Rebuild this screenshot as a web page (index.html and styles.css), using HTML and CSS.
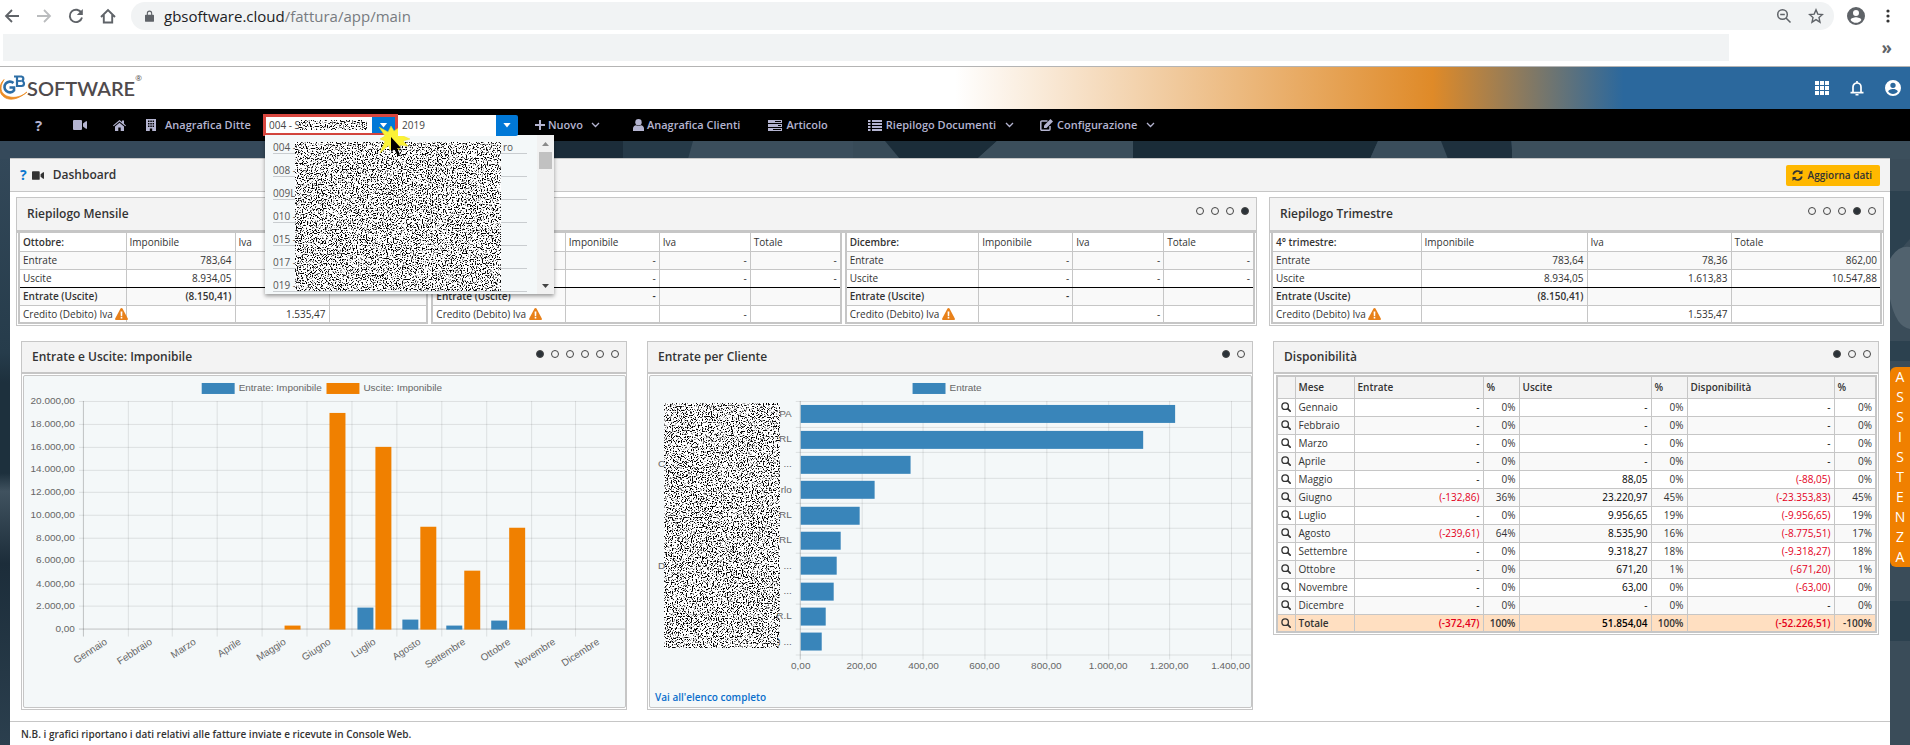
FILE: index.html
```html
<!DOCTYPE html>
<html lang="it">
<head>
<meta charset="utf-8">
<title>Dashboard - GB Software</title>
<link rel="stylesheet" href="styles.css">
</head>
<body>
<svg class="defs" aria-hidden="true">
  <filter id="grain" x="0" y="0" width="100%" height="100%" color-interpolation-filters="sRGB">
    <feTurbulence type="fractalNoise" baseFrequency="0.8" numOctaves="2" seed="4"/>
    <feColorMatrix values="9 0 0 0 -3.3  9 0 0 0 -3.3  9 0 0 0 -3.3  0 0 0 0 1"/>
  </filter>
  <symbol id="i-cam" viewBox="0 0 14 10"><path d="M1 0h7a1 1 0 0 1 1 1v8a1 1 0 0 1-1 1H1a1 1 0 0 1-1-1V1a1 1 0 0 1 1-1zM10 3.5L13 1.2h1v7.6h-1L10 6.5z"/></symbol>
  <symbol id="i-lens" viewBox="0 0 12 12"><circle cx="5" cy="5" r="3.9" fill="none" stroke="currentColor" stroke-width="1.6"/><path d="M8 8l3 3" stroke="currentColor" stroke-width="2" stroke-linecap="round"/></symbol>
  <symbol id="i-warn" viewBox="0 0 13 12"><path d="M6.500 0c.5 0 .8.3 1 .6l5.300 10c.4.700 0 1.400-.8 1.400H1c-.8 0-1.200-.7-.8-1.400l5.300-10c.2-.3.500-.6 1-.6z" fill="#e8811a"/><path d="M5.600 3.500h1.800L7.200 8H5.800zM5.700 8.800h1.600v1.600H5.700z" fill="#fff"/></symbol>
  <symbol id="i-chev" viewBox="0 0 9 6"><path d="M1 1l3.500 3.500L8 1" fill="none" stroke="currentColor" stroke-width="1.300"/></symbol>
  <symbol id="i-user" viewBox="0 0 24 24"><path fill-rule="evenodd" d="M12 0a12 12 0 1 0 0 24 12 12 0 0 0 0-24zm0 4a4 4 0 1 1 0 8 4 4 0 0 1 0-8zm0 17c-3 0-5.600-1.500-7.200-3.800.1-2.400 4.800-3.700 7.200-3.700s7.100 1.300 7.200 3.700C17.600 19.500 15 21 12 21z"/></symbol>
</svg>

<div class="browser">
  <div class="toolbar">
    <button class="tool" aria-label="Indietro"><svg width="16" height="16" viewBox="0 0 16 16"><path d="M15 8H2M8 2L2 8l6 6" fill="none" stroke="#5f6368" stroke-width="1.800"/></svg></button>
    <button class="tool" aria-label="Avanti"><svg width="16" height="16" viewBox="0 0 16 16"><path d="M1 8h13M8 2l6 6-6 6" fill="none" stroke="#babcbe" stroke-width="1.800"/></svg></button>
    <button class="tool" aria-label="Ricarica"><svg width="16" height="16" viewBox="0 0 16 16"><path d="M13.500 5A6.200 6.200 0 1 0 14 9.500" fill="none" stroke="#5f6368" stroke-width="1.900"/><path d="M14.800 1v6h-6z" fill="#5f6368"/></svg></button>
    <button class="tool" aria-label="Pagina iniziale"><svg width="16" height="16" viewBox="0 0 16 16"><path d="M1 9L8 2l7 7M3.800 7v7.500h8.400V7" fill="none" stroke="#5f6368" stroke-width="1.900"/></svg></button>
    <div class="omnibox">
      <svg width="9" height="12" viewBox="0 0 10 13"><path fill-rule="evenodd" d="M2 5V3.500a3 3 0 0 1 6 0V5h1a1 1 0 0 1 1 1v6a1 1 0 0 1-1 1H1a1 1 0 0 1-1-1V6a1 1 0 0 1 1-1zm1.200 0h3.600V3.500a1.800 1.800 0 0 0-3.600 0z" fill="#5f6368"/></svg>
      <span class="url">gbsoftware.cloud<span class="path">/fattura/app/main</span></span>
      <svg width="16" height="16" viewBox="0 0 16 16"><circle cx="6.500" cy="6.500" r="4.800" fill="none" stroke="#5f6368" stroke-width="1.500"/><path d="M10 10l4.500 4.500M4.200 6.500h4.600" stroke="#5f6368" stroke-width="1.500"/></svg>
      <svg width="16" height="16" viewBox="0 0 16 16"><path d="M8 1.800l1.800 4.300 4.700.4L11 9.600l1 4.600-4-2.500-4 2.500 1-4.600L1.500 6.500l4.700-.4z" fill="none" stroke="#5f6368" stroke-width="1.400"/></svg>
    </div>
    <svg class="avatar" width="18" height="18"><use href="#i-user"/></svg>
    <button class="tool kebab" aria-label="Menu"><svg width="4" height="14" viewBox="0 0 4 14" fill="#5f6368"><circle cx="2" cy="2" r="1.600"/><circle cx="2" cy="7" r="1.600"/><circle cx="2" cy="12" r="1.600"/></svg></button>
  </div>
  <div class="bookmarks"><div class="strip"></div><span class="more">»</span></div>
</div>

<header class="brand">
  <div class="logo">
    <svg width="27" height="26" viewBox="0 0 27 26" aria-hidden="true">
      <path d="M4 4.500A13 13 0 0 0 0 12v4c2 8 13 13 27 1-6 5-12 6-17 5C5 21 1 18 1 13c0-4 2-6 3-8.500z" fill="#ec8c23" stroke="#ec8c23" stroke-width=".8"/>
      <path d="M13.500 8A5.400 5.400 0 1 0 14 15.500V12.500h-4.500" fill="none" stroke="#2d6ea6" stroke-width="2.600"/>
      <path d="M17 1.500v9.500h4.500a2.500 2.500 0 0 0 0-5 2.300 2.300 0 0 0 0-4.500H14" fill="none" stroke="#2d6ea6" stroke-width="2.200"/>
      <path d="M17 6h4.500" stroke="#2d6ea6" stroke-width="1.800"/>
    </svg>
    <span class="word">SOFTWARE</span><span class="reg">®</span>
  </div>
  <div class="brand-tools">
    <button aria-label="Applicazioni"><svg width="14" height="14" viewBox="0 0 14 14"><path d="M0 0h4v4H0zM5 0h4v4H5zM10 0h4v4h-4zM0 5h4v4H0zM5 5h4v4H5zM10 5h4v4h-4zM0 10h4v4H0zM5 10h4v4H5zM10 10h4v4h-4z"/></svg></button>
    <button aria-label="Notifiche"><svg width="14" height="16" viewBox="0 0 14 16"><path d="M3 12.500V7a4 4 0 0 1 8 0v5.500M.5 12.700h13M7 3V1" fill="none" stroke="#fff" stroke-width="1.700"/><path d="M5.500 14h3v1.500h-3z"/></svg></button>
    <button aria-label="Profilo"><svg width="16" height="16"><use href="#i-user"/></svg></button>
  </div>
</header>

<nav class="menu">
  <a class="m-help" href="#">?</a>
  <a class="m-cam" href="#" aria-label="Video"><svg width="14" height="10"><use href="#i-cam"/></svg></a>
  <a class="m-home" href="#" aria-label="Home"><svg width="13" height="11" viewBox="0 0 13 11"><path d="M0 5.500L6.500 0 9 2V.5h2v3.200l2 1.800-.7.800L6.500 1.500.7 6.300z"/><path d="M6.500 2.800L11 6.500V11H7.700V7.500H5.300V11H2V6.500z"/></svg></a>
  <a class="m-firms" href="#"><svg width="10" height="12" viewBox="0 0 10 12"><path fill-rule="evenodd" d="M0 0h10v12H6.200V9.500H3.800V12H0zM2 1.500V3h1.500V1.500zm2.300 0V3h1.500V1.500zm2.300 0V3H8V1.500zM2 4v1.500h1.500V4zm2.300 0v1.500h1.500V4zm2.300 0v1.500H8V4zM2 6.500V8h1.500V6.500zm2.300 0V8h1.500V6.500zm2.300 0V8H8V6.500z"/></svg>Anagrafica Ditte</a>
  <div class="combo">
    <input type="text" value="004 - S" aria-label="Ditta"><svg class="mask-input"><rect width="100%" height="100%" filter="url(#grain)"/></svg>
    <button aria-label="Apri elenco ditte"><span class="tri"></span></button>
    <div class="list">
      <ul role="listbox" aria-label="Ditte">
        <li role="option"><span>004 -</span><span>ro</span></li>
        <li role="option">008 -</li>
        <li role="option">009L</li>
        <li role="option">010 -</li>
        <li role="option">015 -</li>
        <li role="option">017 -</li>
        <li role="option">019 -</li>
      </ul>
      <svg class="mask-list"><rect width="100%" height="100%" filter="url(#grain)"/></svg>
      <div class="bar"><span class="up"></span><span class="thumb"></span><span class="down"></span></div>
    </div>
    <svg class="burst" width="36" height="34" viewBox="0 0 36 34"><path d="M2 2l9 5 3-6 3 5 6-4 0 5 12-5-9 9 7 3-7 2 5 5-8-1-1 5-4-4-5 4-1-5-9 8 5-12-5-2 5-3z" fill="#fbf236" stroke="#e8dc2c" stroke-width=".5"/><path d="M14 12v15l3.400-2.800 3 6.300 2.600-1.300-3-6h4.200z" fill="#000"/></svg>
  </div>
  <div class="year"><select aria-label="Anno"><option>2019</option></select><span class="cap"><span class="tri"></span></span></div>
  <a class="m-new" href="#"><svg width="10" height="10" viewBox="0 0 10 10"><path d="M5 0v10M0 5h10" stroke="currentColor" stroke-width="2"/></svg>Nuovo<svg class="chev" width="9" height="6"><use href="#i-chev"/></svg></a>
  <a class="m-clients" href="#"><svg width="11" height="12" viewBox="0 0 11 12"><circle cx="5.500" cy="3.200" r="3.200"/><path d="M0 12V9.500C0 7.500 1.500 6.500 3 6.300c1.500 1 3.500 1 5 0 1.500.2 3 1.200 3 3.200V12z"/></svg>Anagrafica Clienti</a>
  <a class="m-item" href="#"><svg width="14" height="11" viewBox="0 0 14 11"><path fill-rule="evenodd" d="M0 0h14v3H0zM7 1v1h6V1zM0 4h14v3H0zm10 1v1h3V5zM0 8h14v3H0zm5 1v1h8V9z"/></svg>Articolo</a>
  <a class="m-docs" href="#"><svg width="14" height="11" viewBox="0 0 14 11"><path d="M0 0h2.500v2H0zM4 0h10v2H4zM0 3h2.500v2H0zM4 3h10v2H4zM0 6h2.500v2H0zM4 6h10v2H4zM0 9h2.500v2H0zM4 9h10v2H4z"/></svg>Riepilogo Documenti<svg class="chev" width="9" height="6"><use href="#i-chev"/></svg></a>
  <a class="m-conf" href="#"><svg width="13" height="12" viewBox="0 0 13 12"><path d="M7.500 2H1.800A1 1 0 0 0 .8 3v7.200a1 1 0 0 0 1 1H9a1 1 0 0 0 1-1V7" fill="none" stroke="currentColor" stroke-width="1.500"/><path d="M4 9V6.500L10.500 0 13 2.500 6.500 9z"/></svg>Configurazione<svg class="chev" width="9" height="6"><use href="#i-chev"/></svg></a>
</nav>

<div class="stage">
  <svg class="scene" viewBox="0 0 1910 604" preserveAspectRatio="none" aria-hidden="true">
    <defs><linearGradient id="wood" x1="0" x2="0" y1="0" y2="1"><stop offset="0" stop-color="#34495a"/><stop offset=".35" stop-color="#263c4b"/><stop offset=".4" stop-color="#1d303d"/><stop offset=".55" stop-color="#1d303d"/><stop offset=".58" stop-color="#40525f"/><stop offset=".7" stop-color="#1c2d3a"/><stop offset="1" stop-color="#2b3f4e"/></linearGradient></defs>
    <rect width="1910" height="604" fill="url(#wood)"/>
    <rect width="560" height="18" fill="#35495a"/>
    <rect x="553" width="70" height="18" fill="#1b2c39"/>
    <rect x="623" width="300" height="18" fill="#3b4e5c"/>
    <path d="M623 0h70l-5 18h-65z" fill="#263a48"/>
    <path d="M853 0h145l-15 18H853z" fill="#384b58"/>
    <path d="M885 0h112l-20 18H900z" fill="#1b2d39"/>
    <path d="M997 0h136v18H977z" fill="#3b4e5b"/>
    <path d="M1133 0h245l-8 18h-237z" fill="#1a2c38"/>
    <path d="M1378 0h67l5 18h-80z" fill="#3a4d5b"/>
    <path d="M1441 0h70l2 18h-65z" fill="#1e303d"/>
    <rect x="1512" width="398" height="18" fill="#3c4f5c"/>
    <path d="M1890 18h20v586h-20z" fill="#3a4c59"/>
    <path d="M1890 50h20v48q-20 20-20 50zM1890 200h20v20h-20zM1890 460h20v40h-20z" fill="#2c414f"/>
    <path d="M1890 118q8-14 20-12v82q-14-2-20-30z" fill="#51626e"/>
  </svg>

  <main class="sheet">
    <div class="sheet-head">
      <a class="help" href="#">?</a>
      <svg width="12" height="9"><use href="#i-cam"/></svg>
      <h1>Dashboard</h1>
      <button class="refresh"><svg width="11" height="11" viewBox="0 0 11 11"><path d="M1.200 4.500A4.300 4.300 0 0 1 9 3M9.800 6.500A4.300 4.300 0 0 1 2 8" fill="none" stroke="currentColor" stroke-width="1.600"/><path d="M10.500 0v4h-4zM.5 11V7h4z"/></svg>Aggiorna dati</button>
    </div>

    <div class="summary">
      <section class="panel">
        <div class="panel-head"><h2>Riepilogo Mensile</h2><div class="dots"><button aria-label="1"></button><button aria-label="2"></button><button aria-label="3"></button><button class="on" aria-label="4"></button></div></div>
        <div class="tables">
          <table class="sum first">
            <colgroup><col><col><col><col></colgroup>
            <tr><th>Ottobre:</th><td>Imponibile</td><td>Iva</td><td></td></tr>
            <tr><td>Entrate</td><td>783,64</td><td></td><td></td></tr>
            <tr><td>Uscite</td><td>8.934,05</td><td></td><td></td></tr>
            <tr><td>Entrate (Uscite)</td><td>(8.150,41)</td><td></td><td></td></tr>
            <tr><td>Credito (Debito) Iva <svg width="13" height="12"><use href="#i-warn"/></svg></td><td></td><td>1.535,47</td><td></td></tr>
          </table>
          <table class="sum">
            <colgroup><col><col><col><col></colgroup>
            <tr><th></th><td>Imponibile</td><td>Iva</td><td>Totale</td></tr>
            <tr><td></td><td>-</td><td>-</td><td>-</td></tr>
            <tr><td></td><td>-</td><td>-</td><td>-</td></tr>
            <tr><td>Entrate (Uscite)</td><td>-</td><td></td><td></td></tr>
            <tr><td>Credito (Debito) Iva <svg width="13" height="12"><use href="#i-warn"/></svg></td><td></td><td>-</td><td></td></tr>
          </table>
          <table class="sum">
            <colgroup><col><col><col><col></colgroup>
            <tr><th>Dicembre:</th><td>Imponibile</td><td>Iva</td><td>Totale</td></tr>
            <tr><td>Entrate</td><td>-</td><td>-</td><td>-</td></tr>
            <tr><td>Uscite</td><td>-</td><td>-</td><td>-</td></tr>
            <tr><td>Entrate (Uscite)</td><td>-</td><td></td><td></td></tr>
            <tr><td>Credito (Debito) Iva <svg width="13" height="12"><use href="#i-warn"/></svg></td><td></td><td>-</td><td></td></tr>
          </table>
        </div>
      </section>
      <section class="panel">
        <div class="panel-head"><h2>Riepilogo Trimestre</h2><div class="dots"><button aria-label="1"></button><button aria-label="2"></button><button aria-label="3"></button><button class="on" aria-label="4"></button><button aria-label="5"></button></div></div>
        <div class="tables single">
          <table class="sum quarter">
            <colgroup><col><col><col><col></colgroup>
            <tr><th>4° trimestre:</th><td>Imponibile</td><td>Iva</td><td>Totale</td></tr>
            <tr><td>Entrate</td><td>783,64</td><td>78,36</td><td>862,00</td></tr>
            <tr><td>Uscite</td><td>8.934,05</td><td>1.613,83</td><td>10.547,88</td></tr>
            <tr><td>Entrate (Uscite)</td><td>(8.150,41)</td><td></td><td></td></tr>
            <tr><td>Credito (Debito) Iva <svg width="13" height="12"><use href="#i-warn"/></svg></td><td></td><td>1.535,47</td><td></td></tr>
          </table>
        </div>
      </section>
    </div>

    <div class="cards">
      <section class="card">
        <div class="card-head"><h2>Entrate e Uscite: Imponibile</h2><div class="dots"><button class="on" aria-label="1"></button><button aria-label="2"></button><button aria-label="3"></button><button aria-label="4"></button><button aria-label="5"></button><button aria-label="6"></button></div></div>
        <div class="chart">
          <svg viewBox="24 377 602 332" role="img" aria-label="Entrate e Uscite per mese">
            <path class="grid" d="M79 402.500H626M79 425.500H626M79 448.500H626M79 471.500H626M79 493.500H626M79 516.500H626M79 539.500H626M79 562.500H626M79 585.500H626M79 607.500H626M128.500 402V638M172.500 402V638M217.500 402V638M262.500 402V638M307.500 402V638M352.500 402V638M397.500 402V638M442.500 402V638M487.500 402V638M532.500 402V638M576.500 402V638"/>
            <path class="axis" d="M83.500 402V638M79 630.500H626"/>
            <g class="blue"><rect x="202" y="384" width="33" height="11"/><rect x="358" y="609" width="16" height="22"/><rect x="403" y="621" width="16" height="10"/><rect x="447" y="627" width="16" height="4"/><rect x="492" y="622" width="16" height="9"/></g>
            <g class="orange"><rect x="327" y="384" width="33" height="11"/><rect x="285" y="627" width="16" height="4"/><rect x="330" y="414" width="16" height="217"/><rect x="376" y="448" width="16" height="183"/><rect x="421" y="528" width="16" height="103"/><rect x="465" y="572" width="16" height="59"/><rect x="510" y="529" width="16" height="102"/></g>
            <text x="239" y="392">Entrate: Imponibile</text><text x="364" y="392">Uscite: Imponibile</text>
            <g text-anchor="end">
              <text x="75" y="405">20.000,00</text><text x="75" y="428">18.000,00</text><text x="75" y="451">16.000,00</text><text x="75" y="473">14.000,00</text><text x="75" y="496">12.000,00</text><text x="75" y="519">10.000,00</text><text x="75" y="542">8.000,00</text><text x="75" y="564">6.000,00</text><text x="75" y="588">4.000,00</text><text x="75" y="610">2.000,00</text><text x="75" y="633">0,00</text>
              <text transform="translate(108 645) rotate(-33)">Gennaio</text>
              <text transform="translate(153 645) rotate(-33)">Febbraio</text>
              <text transform="translate(197 645) rotate(-33)">Marzo</text>
              <text transform="translate(242 645) rotate(-33)">Aprile</text>
              <text transform="translate(287 645) rotate(-33)">Maggio</text>
              <text transform="translate(332 645) rotate(-33)">Giugno</text>
              <text transform="translate(377 645) rotate(-33)">Luglio</text>
              <text transform="translate(422 645) rotate(-33)">Agosto</text>
              <text transform="translate(467 645) rotate(-33)">Settembre</text>
              <text transform="translate(512 645) rotate(-33)">Ottobre</text>
              <text transform="translate(557 645) rotate(-33)">Novembre</text>
              <text transform="translate(601 645) rotate(-33)">Dicembre</text>
            </g>
          </svg>
        </div>
      </section>

      <section class="card">
        <div class="card-head"><h2>Entrate per Cliente</h2><div class="dots"><button class="on" aria-label="1"></button><button aria-label="2"></button></div></div>
        <div class="chart">
          <svg viewBox="650 377 602 313" role="img" aria-label="Entrate per cliente">
            <path class="grid" d="M796 402.500H1252M796 428.500H1252M796 453.500H1252M796 479.500H1252M796 504.500H1252M796 529.500H1252M796 554.500H1252M796 580.500H1252M796 605.500H1252M796 630.500H1252M796 656.500H1252M862.500 402V661M923.500 402V661M985.500 402V661M1047.500 402V661M1109.500 402V661M1170.500 402V661M1232.500 402V661"/>
            <path class="axis" d="M800.500 402V661"/>
            <g class="blue"><rect x="913" y="384" width="33" height="11"/><rect x="801" y="406" width="375" height="18"/><rect x="801" y="432" width="343" height="18"/><rect x="801" y="457" width="110" height="18"/><rect x="801" y="482" width="74" height="18"/><rect x="801" y="508" width="59" height="18"/><rect x="801" y="533" width="40" height="18"/><rect x="801" y="558" width="36" height="18"/><rect x="801" y="584" width="33" height="18"/><rect x="801" y="609" width="25" height="18"/><rect x="801" y="634" width="21" height="18"/></g>
            <text x="950" y="392">Entrate</text>
            <rect x="665" y="405" width="115" height="244" filter="url(#grain)"/>
            <g text-anchor="end"><text x="792" y="418">PA</text><text x="792" y="443">RL</text><text x="792" y="468">...</text><text x="792" y="494">rlo</text><text x="792" y="519">RL</text><text x="792" y="544">RL</text><text x="792" y="570">...</text><text x="792" y="595">...</text><text x="792" y="620">R.L</text><text x="792" y="646">) ...</text></g>
            <text x="658" y="468">C</text><text x="658" y="570">D</text>
            <g text-anchor="middle"><text x="801" y="671">0,00</text><text x="862" y="671">200,00</text><text x="924" y="671">400,00</text><text x="985" y="671">600,00</text><text x="1047" y="671">800,00</text><text x="1109" y="671">1.000,00</text><text x="1170" y="671">1.200,00</text></g>
            <text x="1251" y="671" text-anchor="end">1.400,00</text>
          </svg>
          <a class="all" href="#">Vai all'elenco completo</a>
        </div>
      </section>

      <section class="card">
        <div class="card-head"><h2>Disponibilità</h2><div class="dots"><button class="on" aria-label="1"></button><button aria-label="2"></button><button aria-label="3"></button></div></div>
        <table class="avail">
          <colgroup><col><col><col><col><col><col><col><col></colgroup>
          <thead><tr><th></th><th>Mese</th><th>Entrate</th><th>%</th><th>Uscite</th><th>%</th><th>Disponibilità</th><th>%</th></tr></thead>
          <tbody>
            <tr><td><svg><use href="#i-lens"/></svg></td><td>Gennaio</td><td>-</td><td>0%</td><td>-</td><td>0%</td><td>-</td><td>0%</td></tr>
            <tr><td><svg><use href="#i-lens"/></svg></td><td>Febbraio</td><td>-</td><td>0%</td><td>-</td><td>0%</td><td>-</td><td>0%</td></tr>
            <tr><td><svg><use href="#i-lens"/></svg></td><td>Marzo</td><td>-</td><td>0%</td><td>-</td><td>0%</td><td>-</td><td>0%</td></tr>
            <tr><td><svg><use href="#i-lens"/></svg></td><td>Aprile</td><td>-</td><td>0%</td><td>-</td><td>0%</td><td>-</td><td>0%</td></tr>
            <tr><td><svg><use href="#i-lens"/></svg></td><td>Maggio</td><td>-</td><td>0%</td><td>88,05</td><td>0%</td><td class="neg">(-88,05)</td><td>0%</td></tr>
            <tr><td><svg><use href="#i-lens"/></svg></td><td>Giugno</td><td class="neg">(-132,86)</td><td>36%</td><td>23.220,97</td><td>45%</td><td class="neg">(-23.353,83)</td><td>45%</td></tr>
            <tr><td><svg><use href="#i-lens"/></svg></td><td>Luglio</td><td>-</td><td>0%</td><td>9.956,65</td><td>19%</td><td class="neg">(-9.956,65)</td><td>19%</td></tr>
            <tr><td><svg><use href="#i-lens"/></svg></td><td>Agosto</td><td class="neg">(-239,61)</td><td>64%</td><td>8.535,90</td><td>16%</td><td class="neg">(-8.775,51)</td><td>17%</td></tr>
            <tr><td><svg><use href="#i-lens"/></svg></td><td>Settembre</td><td>-</td><td>0%</td><td>9.318,27</td><td>18%</td><td class="neg">(-9.318,27)</td><td>18%</td></tr>
            <tr><td><svg><use href="#i-lens"/></svg></td><td>Ottobre</td><td>-</td><td>0%</td><td>671,20</td><td>1%</td><td class="neg">(-671,20)</td><td>1%</td></tr>
            <tr><td><svg><use href="#i-lens"/></svg></td><td>Novembre</td><td>-</td><td>0%</td><td>63,00</td><td>0%</td><td class="neg">(-63,00)</td><td>0%</td></tr>
            <tr><td><svg><use href="#i-lens"/></svg></td><td>Dicembre</td><td>-</td><td>0%</td><td>-</td><td>0%</td><td>-</td><td>0%</td></tr>
            <tr class="total"><td><svg><use href="#i-lens"/></svg></td><td>Totale</td><td class="neg">(-372,47)</td><td>100%</td><td>51.854,04</td><td>100%</td><td class="neg">(-52.226,51)</td><td>-100%</td></tr>
          </tbody>
        </table>
      </section>
    </div>

    <footer class="note">N.B. i grafici riportano i dati relativi alle fatture inviate e ricevute in Console Web.</footer>
  </main>
  <button class="assist" aria-label="Assistenza"><span>A</span><span>S</span><span>S</span><span>I</span><span>S</span><span>T</span><span>E</span><span>N</span><span>Z</span><span>A</span></button>
</div>
</body>
</html>
```
FILE: styles.css
```css
* { box-sizing: border-box; }
html, body { height: 100%; }
body {
  margin: 0;
  display: flex;
  flex-direction: column;
  overflow: hidden;
  background: #fff;
  color: #333;
  font: 10px/14px "Open Sans", "Noto Sans", sans-serif;
}
svg { display: block; flex: none; fill: currentColor; }
a { color: inherit; text-decoration: none; }
button { border: 0; padding: 0; background: none; color: inherit; font: inherit; cursor: pointer; }
h1, h2 { margin: 0; font-size: 12px; font-weight: 600; line-height: 16px; }
.defs { position: absolute; width: 0; height: 0; }

/* Browser chrome */
.browser { flex: none; border-bottom: 1px solid #b4b4b4; padding-bottom: 5px; }
.toolbar { display: flex; align-items: center; height: 32px; padding-left: 4px; }
.tool { width: 16px; margin-right: 16px; }
.omnibox { flex: 1; display: flex; align-items: center; gap: 16px; height: 28px; margin: 0 13px 0 -1px; padding: 0 10px 0 14px; border-radius: 14px; background: #f1f3f4; }
.url { flex: 1; margin-left: -6px; color: #202124; font-size: 15px; line-height: 20px; }
.path { color: #777b80; }
.avatar { margin-right: 21px; color: #5f6368; }
.kebab { width: 4px; margin-right: 20px; }
.bookmarks { display: flex; align-items: center; justify-content: space-between; margin-top: 2px; padding: 0 18px 0 3px; }
.strip { width: calc(100% - 163px); height: 27px; background: #f1f3f4; }
.more { color: #5f6368; font-size: 17px; font-weight: 700; line-height: 20px; }

/* Brand bar */
.brand { flex: none; display: flex; justify-content: space-between; height: 42px; background: linear-gradient(90deg, #fff 50%, #df8a28 75%, #2b689d 85%); }
.logo { display: flex; align-items: center; color: #4f4a4c; }
.word { font: 600 20px/24px "Lato", sans-serif; }
.reg { align-self: flex-start; margin-top: 4px; font-size: 8px; }
.brand-tools { display: flex; align-items: center; gap: 21px; padding-right: 9px; color: #fff; }

/* Menu bar */
.menu { flex: none; position: relative; z-index: 3; display: flex; align-items: center; height: 32px; padding-left: 35px; background: #000; color: #b4b4d0; font-size: 11px; font-weight: 600; line-height: 16px; white-space: nowrap; }
.menu a { display: flex; align-items: center; gap: 4px; }
.menu .m-help { width: 38px; font-size: 15px; font-weight: 700; }
.m-cam { width: 40px; }
.m-home { width: 33px; }
.menu .m-firms { gap: 9px; width: 117px; }
.combo { position: relative; display: flex; width: 135px; height: 22px; border: 3px solid #d9473f; background: #fff; }
.combo input, .year select { border: 0; padding: 0 0 0 3px; min-width: 0; width: 100%; background: #fff; color: #444; font: 10px/14px "Open Sans", sans-serif; outline: 0; }
.combo > button { flex: none; width: 23px; background: #0078d7; }
.tri { display: block; width: 8px; height: 5px; margin: auto; background: #fff; clip-path: polygon(0 0, 100% 0, 50% 100%); }
.mask-input { position: absolute; left: 33px; top: 3px; width: 68px; height: 10px; }
.year { position: relative; width: 120px; height: 21px; display: flex; border-radius: 0 2px 2px 0; overflow: hidden; }
.year select { appearance: none; border-radius: 0; padding-left: 4px; }
.cap { flex: none; display: flex; width: 22px; background: #0078d7; }
.list { position: absolute; left: -1px; top: 18px; width: 289px; height: 159px; background: #f4f8f9; box-shadow: 0 2px 4px rgba(0, 0, 0, .4); color: #555; font-size: 10px; font-weight: 400; line-height: 12px; }
.list ul { list-style: none; margin: 0 27px 0 8px; padding: 0; }
.list li { display: flex; justify-content: space-between; align-items: flex-end; height: 23px; padding-right: 14px; border-bottom: 1px solid #c9cdd0; }
.list li:first-child { height: 19px; }
.mask-list { position: absolute; left: 30px; top: 7px; width: 206px; height: 149px; }
.bar { position: absolute; right: 0; top: 0; bottom: 0; width: 17px; display: flex; flex-direction: column; align-items: center; background: #f1f1f1; }
.up, .down { width: 7px; height: 4px; margin: 7px 0 6px; background: #8a8a8a; clip-path: polygon(50% 0, 100% 100%, 0 100%); }
.thumb { width: 13px; height: 17px; background: #c1c1c1; }
.down { margin-top: auto; background: #444; clip-path: polygon(0 0, 100% 0, 50% 100%); }
.burst { position: absolute; left: 111px; top: 8px; }
.menu .m-new { margin-left: 17px; gap: 3px; }
.menu .chev { margin-left: 5px; }
.menu .m-clients { margin-left: 33px; gap: 3px; }
.m-item { margin-left: 28px; }
.m-docs { margin-left: 40px; }
.m-conf { margin-left: 26px; }

/* Dashboard sheet */
.stage { position: relative; flex: 1; display: flex; padding: 17px 20px 0 10px; min-height: 0; }
.scene { position: absolute; inset: 0; width: 100%; height: 100%; }
.sheet { position: relative; flex: 1; min-width: 0; background: #fff; border-top: 1px solid #c6c6c6; }
.sheet-head { display: flex; align-items: center; gap: 5px; height: 33px; padding: 0 10px; background: #f3f3f3; border-bottom: 1px solid #c6c6c6; }
.help { color: #0b78d0; font-size: 14px; font-weight: 700; }
.sheet-head h1 { flex: 1; margin-left: 4px; }
.refresh { display: flex; align-items: center; gap: 5px; height: 21px; padding: 0 8px 0 6px; border-radius: 2px; background: #ffb800; font-weight: 600; color: #333; }
.dots { display: flex; gap: 7px; margin-bottom: 6px; }
.dots button { width: 8px; height: 8px; border: 1px solid #444; border-radius: 50%; }
.dots .on { background: #2b3238; }

.summary { display: grid; grid-template-columns: 1241fr 615fr; gap: 12px; padding: 5px 6px 0; }
.panel { border: 1px solid #c6c6c6; min-width: 0; }
.panel-head, .card-head { display: flex; align-items: center; justify-content: space-between; padding: 0 7px 0 10px; height: 35px; background: #f3f3f3; border-bottom: 3px solid #c6c6c6; }
.tables { display: grid; grid-template-columns: repeat(3, minmax(0, 1fr)); gap: 3px; padding: 0 1px 1px; }
.single { grid-template-columns: minmax(0, 1fr); padding: 0 1px 1px; }

table { width: 100%; table-layout: fixed; border-collapse: collapse; }
td, th { height: 18px; padding: 0 3px; border: 1px solid #c6c6c6; text-align: left; white-space: nowrap; line-height: 16px; }
td svg { display: inline-block; vertical-align: -2px; }
.sum { border: 2px solid #c6c6c6; border-top: 0; }
.sum th { font-weight: 600; }
.sum tr:nth-child(even) { background: #f9f9f9; }
.sum tr:not(:first-child) td:not(:first-child) { text-align: right; }
.sum tr:nth-child(3) td { border-bottom: 1px solid #000; }
.sum tr:nth-child(4) td { font-weight: 600; border-top: 1px solid #000; }
.sum tr:first-child > * { border-top: 0; }
.sum col:nth-child(1) { width: 133px; }
.sum col:nth-child(2) { width: 94px; }
.sum col:nth-child(3) { width: 91px; }
.first col:nth-child(1) { width: 107px; }
.first col:nth-child(2) { width: 109px; }
.first col:nth-child(3) { width: 94px; }
.quarter col:nth-child(1) { width: 149px; }
.quarter col:nth-child(2) { width: 166px; }
.quarter col:nth-child(3) { width: 144px; }

.cards { display: grid; grid-template-columns: repeat(3, minmax(0, 1fr)); align-items: start; gap: 20px; padding: 15px 11px 11px; }
.card { border: 1px solid #c6c6c6; padding-bottom: 1px; }
.card-head { height: 32px; margin-bottom: 1px; border-bottom-width: 2px; }
.chart { margin-left: 1px; border: 1px solid #c6c6c6; border-radius: 2px; background: #f4f8f9; }
.chart > svg { width: 100%; height: auto; font: 10px "Liberation Sans", Arial, sans-serif; fill: #666; }
.grid { stroke: rgba(0, 0, 0, .1); fill: none; }
.axis { stroke: rgba(0, 0, 0, .22); fill: none; }
.blue { fill: #3985ba; }
.orange { fill: #f08000; }
.all { display: block; padding: 2px 5px 3px; color: #0a6fcc; font-weight: 600; }

.avail { width: calc(100% - 3px); margin: 0 1px 0 2px; border: 2px solid #c6c6c6; }
.avail th { height: 22px; background: #f3f3f3; font-weight: 600; }
.avail td { text-align: right; }
.avail td:nth-child(2) { text-align: left; }
.avail td:nth-child(1) { text-align: center; }
.avail td svg { width: 10px; height: 10px; vertical-align: -1px; }
.avail tbody tr:nth-child(even) { background: #f9f9f9; }
.avail td:nth-child(3), .avail td:nth-child(5), .avail td:nth-child(7) { color: #000; }
.avail td.neg { color: #e3001b; }
.avail .total { background: #ffdfc1; font-weight: 600; }
.avail col:nth-child(1) { width: 18px; }
.avail col:nth-child(2) { width: 59px; }
.avail col:nth-child(3) { width: 129px; }
.avail col:nth-child(4) { width: 36px; }
.avail col:nth-child(5) { width: 132px; }
.avail col:nth-child(6) { width: 36px; }
.avail col:nth-child(7) { width: 147px; }

.note { padding: 5px 11px; border-top: 1px solid #c6c6c6; font-weight: 600; }
.assist { position: absolute; right: 0; top: 226px; width: 20px; display: flex; flex-direction: column; align-items: center; border-radius: 6px 0 0 6px; background: #f08000; color: #fff; font-size: 14px; line-height: 20px; }
```
